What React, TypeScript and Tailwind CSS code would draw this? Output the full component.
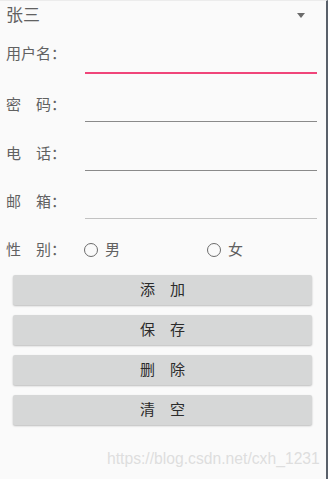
import React from "react";

const cjk = "font-['Roboto','Noto_Sans_CJK_SC',sans-serif]";

interface FieldRowProps {
  a: string;
  b?: string;
  full?: string;
  focused?: boolean;
  line: string;
  className?: string;
}

function FieldRow({ a, b, full, focused, line, className = "" }: FieldRowProps) {
  return (
    <div className={`flex items-center h-[48px] ${className}`}>
      <div className="w-[85px] pl-[6px] text-[15px] text-[#616161] leading-none whitespace-pre">
        {full ? full : `${a}　${b}：`}
      </div>
      <div className="flex-1 mr-[9px] h-[48px] flex flex-col">
        <div className={focused ? "mt-[42px] h-[2px] bg-[#f0457a]" : `mt-[40px] h-px ${line}`} />
      </div>
    </div>
  );
}

function Radio({ label }: { label: string }) {
  return (
    <div className="flex items-center">
      <span className="w-[14px] h-[14px] rounded-full border-[1.5px] border-[#6b6b6b]" />
      <span className="ml-[7px] text-[15px] text-[#616161] leading-none">{label}</span>
    </div>
  );
}

export default function App() {
  const buttons = ["添", "加", "保", "存", "删", "除", "清", "空"];
  const pairs = [0, 1, 2, 3].map((i) => [buttons[i * 2], buttons[i * 2 + 1]]);

  return (
    <div className={`relative w-[328px] h-[479px] bg-[#fafafa] border-t border-[#ececec] border-r-2 border-r-[#59606a] overflow-hidden ${cjk}`}>
      {/* spinner */}
      <div className="flex items-center h-[29px] pl-[6px] pr-[21px]">
        <span className="text-[17px] text-[#616161] leading-none">张三</span>
        <span className="ml-auto w-0 h-0 border-l-[4px] border-r-[4px] border-t-[5px] border-l-transparent border-r-transparent border-t-[#6b6b6b]" />
      </div>

      <FieldRow a="" full="用户名：" focused line="" />
      <FieldRow a="密" b="码" line="bg-[#8a8a8a]" className="mt-[3px]" />
      <FieldRow a="电" b="话" line="bg-[#8a8a8a]" className="mt-px" />
      <FieldRow a="邮" b="箱" line="bg-[#c2c2c2]" />

      {/* gender */}
      <div className="flex items-center h-[48px]">
        <div className="w-[84px] pl-[6px] text-[15px] text-[#616161] leading-none whitespace-pre">性　别：</div>
        <div className="w-[123px]">
          <Radio label="男" />
        </div>
        <Radio label="女" />
      </div>

      {/* buttons */}
      <div className="flex flex-col gap-[10px] ml-[13px] mr-[14px] mt-px">
        {pairs.map(([x, y]) => (
          <button
            key={x}
            className="h-[30px] bg-[#d6d7d7] rounded-[2px] shadow-[0_1px_2px_rgba(0,0,0,0.25)] flex items-center justify-center gap-[15px] text-[15px] text-[#2b2b2b] leading-none"
          >
            <span>{x}</span>
            <span>{y}</span>
          </button>
        ))}
      </div>

      {/* watermark */}
      <div className="absolute left-[107px] top-[450px] text-[15.7px] text-[#dedede] font-['Liberation_Sans',sans-serif] leading-none">
        https://blog.csdn.net/cxh_1231
      </div>
    </div>
  );
}
